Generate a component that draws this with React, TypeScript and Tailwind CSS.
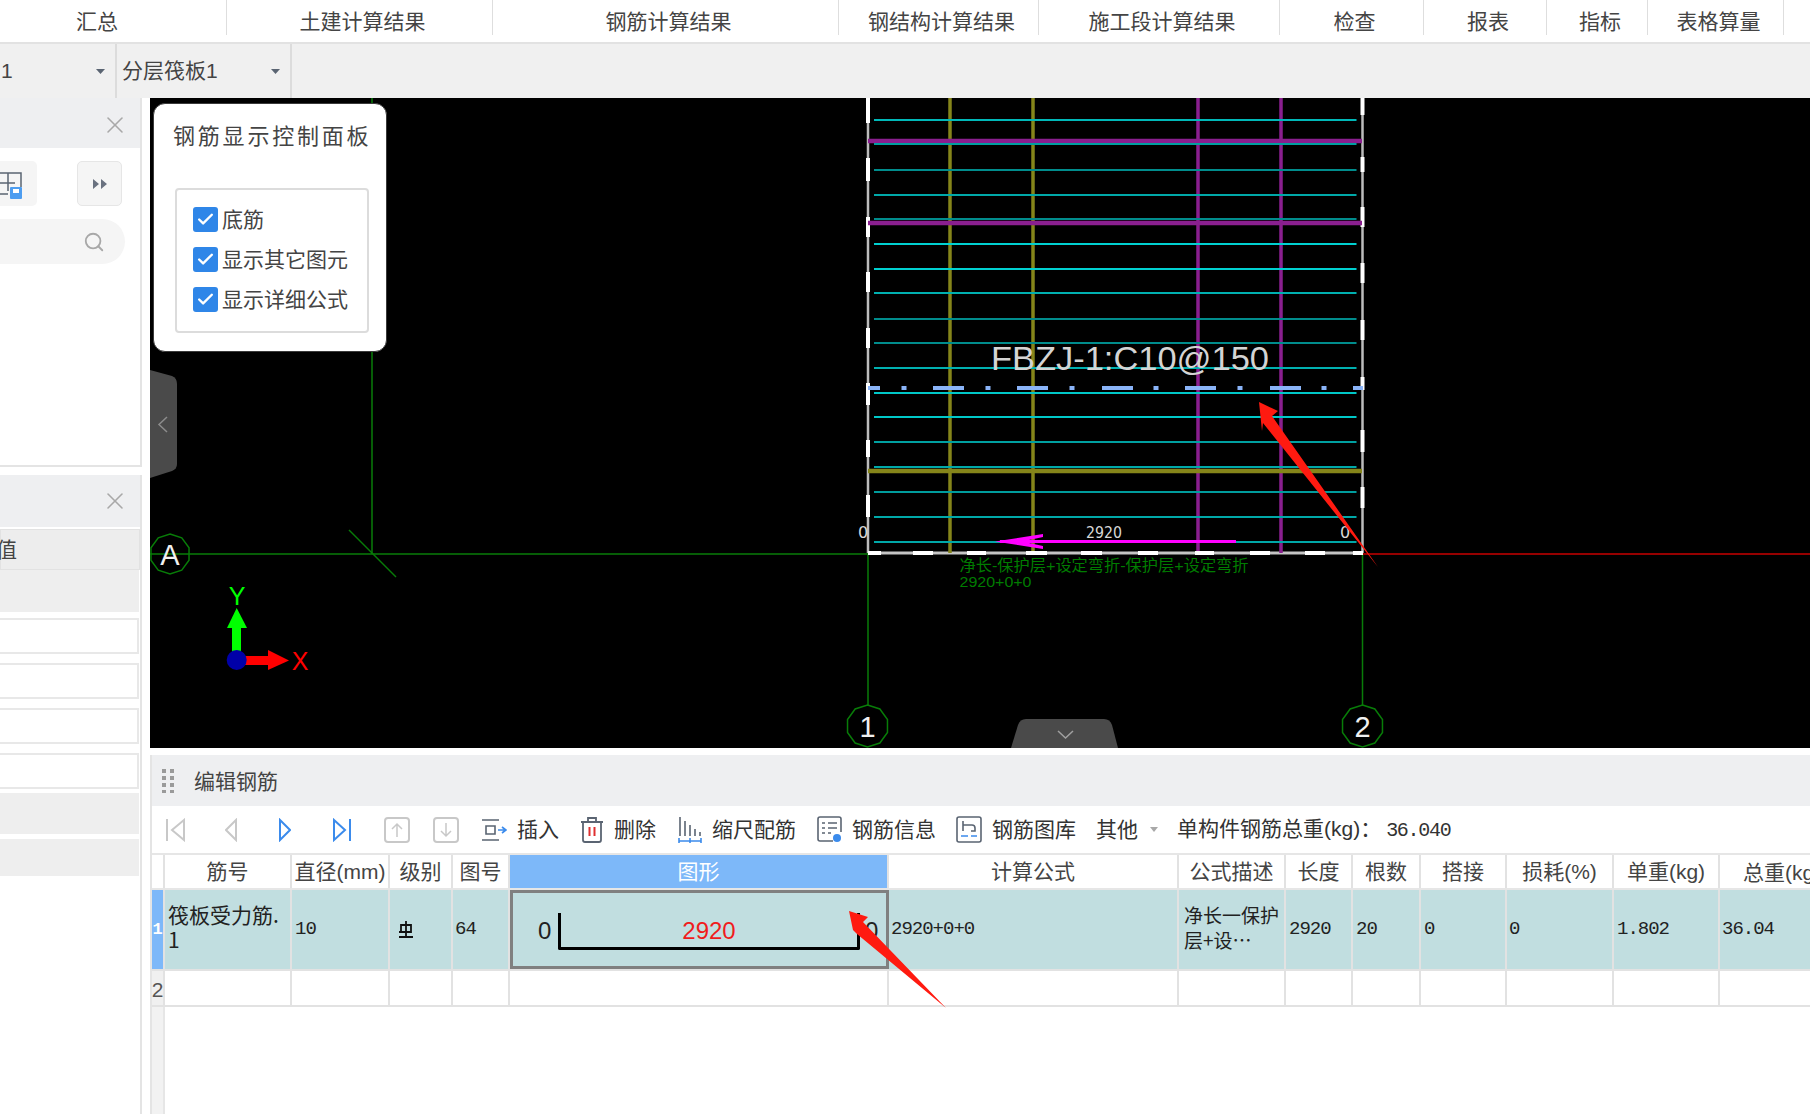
import { Check, Search, X } from 'lucide-react';
import type { ReactNode } from 'react';

const tabs = [
  { label: '汇总', w: 'w-[227px] pr-[32px]' },
  { label: '土建计算结果', w: 'w-[266px] pl-[6px]' },
  { label: '钢筋计算结果', w: 'w-[346px] pl-[6px]' },
  { label: '钢结构计算结果', w: 'w-[200px] pl-[6px]' },
  { label: '施工段计算结果', w: 'w-[241px] pl-[6px]' },
  { label: '检查', w: 'w-[144px] pl-[6px]' },
  { label: '报表', w: 'w-[123px] pl-[6px]' },
  { label: '指标', w: 'w-[101px] pl-[6px]' },
  { label: '表格算量', w: 'w-[136px] pl-[6px]' },
];

const columns = [
  { label: '筋号', w: 'w-[127px]' },
  { label: '直径(mm)', w: 'w-[98px]' },
  { label: '级别', w: 'w-[63px]' },
  { label: '图号', w: 'w-[57px]' },
  { label: '图形', w: 'w-[379px]', active: true },
  { label: '计算公式', w: 'w-[290px]' },
  { label: '公式描述', w: 'w-[107px]' },
  { label: '长度', w: 'w-[67px]' },
  { label: '根数', w: 'w-[68px]' },
  { label: '搭接', w: 'w-[86px]' },
  { label: '损耗(%)', w: 'w-[107px]' },
  { label: '单重(kg)', w: 'w-[106px]' },
];

const barRows = [
  [120, '#00b8b8'], [144, '#00a0a0'], [170, '#008c8c'], [195, '#00a8a8'], [219, '#008c8c'],
  [244, '#00d0d0'], [269, '#00d0d0'], [293, '#00b0b0'], [319, '#008c8c'], [343, '#008c8c'],
  [368, '#00b0b0'], [393, '#00c8c8'], [417, '#00c8c8'], [442, '#00a0a0'], [467, '#00a8a8'],
  [492, '#009c9c'], [517, '#00a8a8'], [542, '#00a8a8'],
] as const;

const leftDashes = [[98, 123], [158, 181], [217, 237], [272, 292], [328, 348], [383, 405], [440, 457], [495, 517]];
const rightDashes = [[98, 115], [157, 172], [207, 227], [263, 283], [320, 340], [377, 390], [430, 452], [487, 508]];
const bottomDashes = [[868, 881], [913, 933], [967, 986], [1026, 1047], [1081, 1102], [1138, 1158], [1195, 1214], [1250, 1270], [1305, 1325], [1353, 1363]];
const blueDashes = [[868, 880], [933, 964], [1017, 1048], [1102, 1133], [1185, 1216], [1270, 1301], [1353, 1363]];
const blueDots = [904, 988, 1072, 1156, 1240, 1324];

function decagon(cx: number, cy: number, r: number) {
  return Array.from({ length: 10 }, (_, i) => {
    const a = (Math.PI * 2 * i) / 10 - Math.PI / 2;
    return `${cx + r * Math.cos(a)},${cy + r * Math.sin(a)}`;
  }).join(' ');
}

function Drawing() {
  return (
    <svg viewBox="150 98 1660 650" className="absolute inset-0 h-full w-full">
      {/* axis grid */}
      <g stroke="#087c08" strokeWidth="1.5" fill="none">
        <line x1="150" y1="554" x2="868" y2="554" />
        <line x1="372" y1="98" x2="372" y2="554" />
        <line x1="349" y1="530" x2="396" y2="577" />
        <line x1="868" y1="553" x2="868" y2="706" />
        <line x1="1362.5" y1="553" x2="1362.5" y2="706" />
        <polygon points={decagon(170, 554, 20)} />
        <polygon points={decagon(867.5, 726, 21)} />
        <polygon points={decagon(1362.5, 726, 21)} />
      </g>
      <line x1="1363" y1="554" x2="1810" y2="554" stroke="#c80000" strokeWidth="1.5" />
      <g fill="#f0f0f0" fontFamily="'Liberation Sans', sans-serif" fontSize="29" textAnchor="middle">
        <text x="170" y="565">A</text>
        <text x="867.5" y="737">1</text>
        <text x="1362.5" y="737">2</text>
      </g>

      {/* slab outline */}
      <g stroke="#bcbcbc" strokeWidth="2.5">
        <line x1="868" y1="98" x2="868" y2="553" />
        <line x1="1362.5" y1="98" x2="1362.5" y2="553" />
      </g>
      <line x1="868" y1="553" x2="1363" y2="553" stroke="#c4c4c4" strokeWidth="3" />
      {leftDashes.map(([a, b]) => (
        <line key={a} x1="868" y1={a} x2="868" y2={b} stroke="#fff" strokeWidth="4" />
      ))}
      {rightDashes.map(([a, b]) => (
        <line key={a} x1="1362.5" y1={a} x2="1362.5" y2={b} stroke="#fff" strokeWidth="4" />
      ))}

      {/* bars */}
      {[950, 1033].map((x) => (
        <line key={x} x1={x} y1="98" x2={x} y2="553" stroke="#85851a" strokeWidth="3.5" />
      ))}
      {[1198, 1281].map((x) => (
        <line key={x} x1={x} y1="98" x2={x} y2="553" stroke="#8a1f8f" strokeWidth="3.5" />
      ))}
      <line x1="868" y1="141" x2="1362" y2="141" stroke="#8a1f8f" strokeWidth="4.5" />
      <line x1="868" y1="223" x2="1362" y2="223" stroke="#8a1f8f" strokeWidth="4.5" />
      <line x1="868" y1="471" x2="1362" y2="471" stroke="#85851a" strokeWidth="4.5" />
      {barRows.map(([y, c]) => (
        <line key={y} x1="874" y1={y} x2="1356.5" y2={y} stroke={c} strokeWidth="2" />
      ))}
      {bottomDashes.map(([a, b]) => (
        <line key={a} x1={a} y1="553" x2={b} y2="553" stroke="#fff" strokeWidth="4" />
      ))}

      {/* selected bar */}
      {blueDashes.map(([a, b]) => (
        <line key={a} x1={a} y1="388" x2={b} y2="388" stroke="#8ab4f8" strokeWidth="4" />
      ))}
      {blueDots.map((x) => (
        <rect key={x} x={x - 2.5} y="386" width="5" height="4" fill="#8ab4f8" />
      ))}
      <text x="991" y="370" fill="#d4d4d4" fontFamily="'Liberation Sans', sans-serif" fontSize="34" textLength="278" lengthAdjust="spacingAndGlyphs">
        FBZJ-1:C10@150
      </text>
      <g fill="#d8d8d8" fontFamily="'DejaVu Sans', sans-serif" fontSize="16">
        <text x="1086" y="538" textLength="36" lengthAdjust="spacingAndGlyphs">2920</text>
        <text x="858" y="538">0</text>
        <text x="1340" y="538">0</text>
      </g>
      <line x1="1000" y1="541.5" x2="1236" y2="541.5" stroke="#ff00ff" strokeWidth="3" />
      <polygon points="995,541.5 1043,534 1043,537 1022,541.5 1043,546 1043,549" fill="#ff00ff" />
      <g fill="#007c00" fontFamily="'Liberation Sans', 'Noto Sans CJK SC', sans-serif" fontSize="15.5">
        <text x="959.5" y="571" textLength="289" lengthAdjust="spacingAndGlyphs">净长-保护层+设定弯折-保护层+设定弯折</text>
        <text x="959.5" y="587" textLength="72" lengthAdjust="spacingAndGlyphs">2920+0+0</text>
      </g>

      {/* origin gizmo */}
      <rect x="232" y="626" width="9" height="28" fill="#00ff00" />
      <polygon points="236.7,608 247,628 227,628" fill="#00ff00" />
      <rect x="244" y="656" width="26" height="9" fill="#ff0000" />
      <polygon points="289,660.5 268,650 268,670" fill="#ff0000" />
      <circle cx="236.7" cy="660" r="10" fill="#0000a8" />
      <g fontFamily="'Liberation Sans', sans-serif" fontSize="25">
        <text x="237" y="605" fill="#00ff00" textAnchor="middle">Y</text>
        <text x="300" y="670" fill="#ff0000" textAnchor="middle">X</text>
      </g>

      {/* collapse handles */}
      <path d="M150 370 L172 376 Q177 378 177 384 L177 464 Q177 469 172 471 L150 478 Z" fill="#4a4a4a" />
      <path d="M167 417 L159 424.5 L167 432" stroke="#8c8c8c" strokeWidth="1.5" fill="none" />
      <path d="M1011 748 L1018 725 Q1020 719 1026 719 L1104 719 Q1110 719 1112 725 L1118 748 Z" fill="#4a4a4a" />
      <path d="M1058 731 L1065.5 738 L1073 731" stroke="#a0a0a0" strokeWidth="1.5" fill="none" />

      {/* annotation */}
      <polygon points="1259,402 1278,411 1272,416 1378,567 1263,423 1262,431" fill="#ff1a10" />
    </svg>
  );
}

function RebarPanel() {
  return (
    <div className="absolute left-[3px] top-[5px] flex h-[249px] w-[234px] flex-col rounded-[12px] border border-[#3a3a3a] bg-white text-[#444]">
      <div className="mt-[19px] whitespace-nowrap pl-[19px] text-[22px] leading-[28px] tracking-[2.8px]">钢筋显示控制面板</div>
      <div className="ml-[21px] mt-[37px] flex h-[145px] w-[194px] flex-col gap-[15px] rounded-[4px] border-2 border-[#dcdcdc] pl-[16px] pt-[17px]">
        {['底筋', '显示其它图元', '显示详细公式'].map((label) => (
          <div key={label} className="flex h-[25px] items-center gap-[4px] text-[21px]">
            <span className="flex h-[25px] w-[25px] items-center justify-center rounded-[3px] bg-[#2f86e8]">
              <Check size={19} strokeWidth={3} className="text-white" />
            </span>
            {label}
          </div>
        ))}
      </div>
    </div>
  );
}

function PanelHeader({ className }: { className: string }) {
  return (
    <div className={`flex items-center justify-end bg-[#eeeff1] pr-[11px] ${className}`}>
      <X size={28} strokeWidth={1.3} className="text-[#a8a8a8]" />
    </div>
  );
}

function LeftPanels() {
  return (
    <aside className="flex w-[150px] shrink-0 flex-col gap-[8px] bg-white pr-[8px]">
      <div className="flex h-[369px] flex-col border-r-2 border-b-2 border-[#e4e4e4]">
        <PanelHeader className="h-[50px] pt-[4px]" />
        <div className="mt-[13px] flex h-[45px] justify-between pr-[18px]">
          <div className="flex w-[37px] items-center justify-end rounded-r-[5px] bg-[#f5f5f5] pr-[15px]">
            <svg width="22" height="30" viewBox="0 0 22 30" fill="none">
              <path d="M0 4 H21 V18 M8 4 V22 M0 14 H15 M0 25 H8" stroke="#5a6472" strokeWidth="1.5" />
              <rect x="10" y="18" width="12" height="12" rx="1" fill="#4d9df0" />
              <rect x="13" y="20" width="6" height="4" fill="#fff" />
            </svg>
          </div>
          <div className="flex w-[45px] items-center justify-center rounded-[5px] border border-[#e6e6e6] bg-[#f5f5f5]">
            <svg width="14" height="10" viewBox="0 0 14 10" fill="#6a7280">
              <path d="M0 0 L6 5 L0 10 Z M8 0 L14 5 L8 10 Z" />
            </svg>
          </div>
        </div>
        <div className="mt-[13px] flex h-[45px] w-[125px] items-center justify-end rounded-r-full bg-[#f5f5f5] pr-[20px]">
          <Search size={22} strokeWidth={2} className="text-[#a8a8a8]" />
        </div>
      </div>
      <div className="flex min-h-0 flex-1 flex-col border-r-2 border-[#e4e4e4]">
        <PanelHeader className="h-[52px]" />
        <div className="mt-[2px] flex h-[41px] items-center border border-[#e2e2e2] bg-[#ededed] text-[21px] text-[#444]">
          <span className="-ml-[5px]">值</span>
        </div>
        <div className="h-[42px] w-[139px] bg-[#eeeeee]" />
        <div className="mt-[6px] flex flex-col gap-[9px]">
          {[0, 1, 2, 3].map((i) => (
            <div key={i} className="h-[36px] w-[139px] border-2 border-l-0 border-[#e8e8e8] bg-white" />
          ))}
        </div>
        <div className="mt-[4px] h-[41px] w-[139px] bg-[#eeeeee]" />
        <div className="mt-[5px] h-[37px] w-[139px] bg-[#eeeeee]" />
      </div>
    </aside>
  );
}

function Tool({ icon, label, className }: { icon: ReactNode; label: string; className: string }) {
  return (
    <div className={`flex items-center ${className}`}>
      {icon}
      <span className="ml-[10px] whitespace-nowrap">{label}</span>
    </div>
  );
}

function Toolbar() {
  const off = '#c8c8c8';
  const on = '#3b8bec';
  return (
    <div className="flex h-[49px] items-center border-b-2 border-[#e6e6e6] pl-[14px] text-[21px] text-[#333]">
      <svg width="19" height="24" viewBox="0 0 19 24" fill="none" stroke={off} strokeWidth="2">
        <path d="M1 1 V23 M18 2 L6 12 L18 22 Z" />
      </svg>
      <svg width="12" height="24" viewBox="0 0 12 24" fill="none" stroke={off} strokeWidth="2" className="ml-[40px]">
        <path d="M11 2 L1 12 L11 22 Z" />
      </svg>
      <svg width="12" height="24" viewBox="0 0 12 24" fill="none" stroke={on} strokeWidth="2" className="ml-[42px]">
        <path d="M1 2 L11 12 L1 22 Z" />
      </svg>
      <svg width="18" height="24" viewBox="0 0 18 24" fill="none" stroke={on} strokeWidth="2" className="ml-[42px]">
        <path d="M17 1 V23 M1 2 L12 12 L1 22 Z" />
      </svg>
      <svg width="26" height="26" viewBox="0 0 26 26" fill="none" stroke={off} strokeWidth="1.5" className="ml-[33px]">
        <rect x="1" y="1" width="24" height="24" rx="3" strokeWidth="2" />
        <path d="M13 20 V7 M8 12 L13 7 L18 12" />
      </svg>
      <svg width="26" height="26" viewBox="0 0 26 26" fill="none" stroke={off} strokeWidth="1.5" className="ml-[23px]">
        <rect x="1" y="1" width="24" height="24" rx="3" strokeWidth="2" />
        <path d="M13 6 V19 M8 14 L13 19 L18 14" />
      </svg>
      <Tool
        className="ml-[22px]"
        label="插入"
        icon={
          <svg width="26" height="22" viewBox="0 0 26 22" fill="none" stroke="#5a6472" strokeWidth="1.6">
            <path d="M1 1 H18 M1 21 H18 M5 7 H14 V15 H5 Z" />
            <path d="M17 11 H24 M21 8 L25 11 L21 14" stroke="#3b8bec" />
          </svg>
        }
      />
      <Tool
        className="ml-[21px]"
        label="删除"
        icon={
          <svg width="24" height="27" viewBox="0 0 24 27" fill="none" stroke="#5a6472" strokeWidth="1.8">
            <path d="M1 6 H23 M8 6 V2 H16 V6 M3 6 V24 Q3 26 5 26 H19 Q21 26 21 24 V6" />
            <path d="M9.5 11 V20 M14.5 11 V20" stroke="#e03030" strokeWidth="2" />
          </svg>
        }
      />
      <Tool
        className="ml-[22px]"
        label="缩尺配筋"
        icon={
          <svg width="24" height="27" viewBox="0 0 24 27" fill="none" stroke="#5a6472" strokeWidth="1.6">
            <path d="M2 1 V20 M7 5 V20 M12 9 V20 M17 13 V20 M22 16 V20" />
            <path d="M1 25 H23 M1 22 V27 M12 22 V27 M23 22 V27" stroke="#3b8bec" />
          </svg>
        }
      />
      <Tool
        className="ml-[21px]"
        label="钢筋信息"
        icon={
          <svg width="25" height="27" viewBox="0 0 25 27" fill="none" stroke="#5a6472" strokeWidth="1.6">
            <path d="M16 25 H3 Q1 25 1 23 V3 Q1 1 3 1 H22 Q24 1 24 3 V16" />
            <path d="M5 7 H8 M11 7 H20 M5 12 H8 M11 12 H20 M5 17 H8 M11 17 H14" />
            <circle cx="20" cy="22" r="4" fill="#3b8bec" stroke="none" />
          </svg>
        }
      />
      <Tool
        className="ml-[20px]"
        label="钢筋图库"
        icon={
          <svg width="26" height="27" viewBox="0 0 26 27" fill="none" stroke="#5a6472" strokeWidth="1.6">
            <rect x="1" y="1" width="24" height="25" rx="2" />
            <path d="M7 5 V15 M7 9 H16 Q19 9 19 12 V15 H15" />
            <path d="M5 20 H12 M15 20 H21" stroke="#3b8bec" />
          </svg>
        }
      />
      <span className="ml-[20px]">其他</span>
      <svg width="8" height="5" viewBox="0 0 8 5" fill="#a8a8a8" className="ml-[12px]">
        <path d="M0 0 H8 L4 5 Z" />
      </svg>
      <span className="ml-[19px] whitespace-nowrap">
        单构件钢筋总重(kg)：
        <span className="ml-[5px] font-['Liberation_Mono','Noto_Sans_CJK_SC',monospace] text-[20px] tracking-[-1.3px]">36.040</span>
      </span>
    </div>
  );
}

function BarTable() {
  const cell = 'shrink-0 border-r-2 border-[#e2e2e2]';
  const mono = "font-['Liberation_Mono','Noto_Sans_CJK_SC',monospace] text-[19px] tracking-[-1px] text-[#222]";
  const text = "font-['Noto_Sans_CJK_SC',sans-serif] tracking-normal whitespace-nowrap leading-[25px]";
  return (
    <div className="flex min-h-0 flex-1 flex-col text-[21px]">
      <div className="flex h-[35px] border-b-2 border-[#e6e6e6] text-[#444]">
        <div className={`${cell} w-[13px]`} />
        {columns.map((c) => (
          <div
            key={c.label}
            className={`${cell} ${c.w} flex items-center justify-center whitespace-nowrap pt-[1px] ${c.active ? 'bg-[#7db8f9] text-white' : ''}`}
          >
            {c.label}
          </div>
        ))}
        <div className="flex-1 overflow-hidden whitespace-nowrap pl-[23px] pt-[1px] leading-[33px]">总重(kg)</div>
      </div>

      <div className={`flex h-[81px] border-b-2 border-[#e2e2e2] bg-[#c1dee0] ${mono}`}>
        <div className={`${cell} flex w-[13px] items-center justify-center bg-[#7db8f9] text-[17px] font-bold tracking-normal text-white`}>1</div>
        <div className={`${cell} w-[127px] pl-[3px] pt-[12px] text-[21px] ${text}`}>
          筏板受力筋.
          <br />1
        </div>
        <div className={`${cell} flex w-[98px] items-center pl-[3px]`}>10</div>
        <div className={`${cell} flex w-[63px] items-center pl-[8px]`}>
          <svg width="16" height="17" viewBox="0 0 16 17" fill="none" stroke="#111" strokeWidth="1.8">
            <path d="M3 11 V4 H13 V11 H1 M8 0 V15 M1 16 H15" />
          </svg>
        </div>
        <div className={`${cell} flex w-[57px] items-center pl-[2px]`}>64</div>
        <div className="flex w-[379px] shrink-0 items-start border-[3px] border-[#808080] pl-[25px] pt-[20px] font-['Liberation_Sans',sans-serif] text-[24px] tracking-normal">
          <span className="w-[20px] text-[#222]">0</span>
          <div className="flex h-[37px] w-[302px] justify-center rounded-b-[2px] border-x-[3px] border-b-[3px] border-black text-[#f01c1c]">
            <span>2920</span>
          </div>
          <span className="ml-[5px] text-[#222]">0</span>
        </div>
        <div className={`${cell} flex w-[290px] items-center pl-[2px]`}>2920+0+0</div>
        <div className={`${cell} w-[107px] pl-[5px] pt-[12px] text-[19px] ${text}`}>
          净长一保护
          <br />层+设…
        </div>
        <div className={`${cell} flex w-[67px] items-center pl-[3px]`}>2920</div>
        <div className={`${cell} flex w-[68px] items-center pl-[3px]`}>20</div>
        <div className={`${cell} flex w-[86px] items-center pl-[3px]`}>0</div>
        <div className={`${cell} flex w-[107px] items-center pl-[2px]`}>0</div>
        <div className={`${cell} flex w-[106px] items-center pl-[3px]`}>1.802</div>
        <div className="flex flex-1 items-center pl-[2px]">36.04</div>
      </div>

      <div className="flex h-[36px] border-b-2 border-[#e2e2e2]">
        <div className={`${cell} flex w-[13px] items-center justify-center bg-[#f0f0f0] pt-[3px] text-[#555]`}>2</div>
        {columns.map((c) => (
          <div key={c.label} className={`${cell} ${c.w}`} />
        ))}
      </div>
      <div className="w-[13px] flex-1 border-r-2 border-[#e6e6e6] bg-[#f2f2f2]" />
    </div>
  );
}

export default function App() {
  return (
    <div className="relative flex h-[1114px] w-[1810px] flex-col overflow-hidden bg-white font-['Liberation_Sans','Noto_Sans_CJK_SC',sans-serif]">
      <div className="flex h-[44px] shrink-0 border-b-2 border-[#e2e2e2] text-[21px] text-[#444]">
        {tabs.map((t) => (
          <div key={t.label} className={`relative flex h-[35px] shrink-0 items-center justify-center whitespace-nowrap border-r border-[#dedede] pt-[8px] ${t.w}`}>
            {t.label}
          </div>
        ))}
      </div>

      <div className="flex h-[54px] shrink-0 bg-[#f0f0f0] text-[21px] text-[#444]">
        <div className="flex w-[117px] items-center justify-between border-r-2 border-[#dcdcdc] pl-[1px] pr-[10px]">
          1
          <svg width="9" height="5" viewBox="0 0 9 5" fill="#5a6472">
            <path d="M0 0 H9 L4.5 5 Z" />
          </svg>
        </div>
        <div className="flex w-[175px] items-center justify-between border-r-2 border-[#dcdcdc] pl-[5px] pr-[10px]">
          分层筏板1
          <svg width="9" height="5" viewBox="0 0 9 5" fill="#5a6472">
            <path d="M0 0 H9 L4.5 5 Z" />
          </svg>
        </div>
      </div>

      <div className="flex min-h-0 flex-1">
        <LeftPanels />
        <div className="flex w-[1660px] flex-col">
          <div className="relative h-[650px] shrink-0 overflow-hidden bg-black">
            <Drawing />
            <RebarPanel />
          </div>
          <div className="mt-[7px] flex min-h-0 flex-1 flex-col border-l-2 border-[#e4e4e4]">
            <div className="flex h-[51px] shrink-0 items-center gap-[20px] bg-[#eeeff1] pl-[10px] text-[21px] text-[#444]">
              <svg width="12" height="24" viewBox="0 0 12 24" fill="#9a9a9a">
                <rect x="0" y="0" width="4" height="4" /><rect x="8" y="0" width="4" height="4" />
                <rect x="0" y="7" width="4" height="4" /><rect x="8" y="7" width="4" height="4" />
                <rect x="0" y="14" width="4" height="4" /><rect x="8" y="14" width="4" height="4" />
                <rect x="0" y="21" width="4" height="3" /><rect x="8" y="21" width="4" height="3" />
              </svg>
              <span className="pt-[2px]">编辑钢筋</span>
            </div>
            <Toolbar />
            <BarTable />
          </div>
        </div>
      </div>

      {/* annotation arrow over the table */}
      <svg width="110" height="110" viewBox="0 0 110 110" className="absolute left-[845px] top-[905px]">
        <polygon points="4,6 23,12 18,17 101,103 12,29 8,25" fill="#ff1a10" />
      </svg>
    </div>
  );
}
